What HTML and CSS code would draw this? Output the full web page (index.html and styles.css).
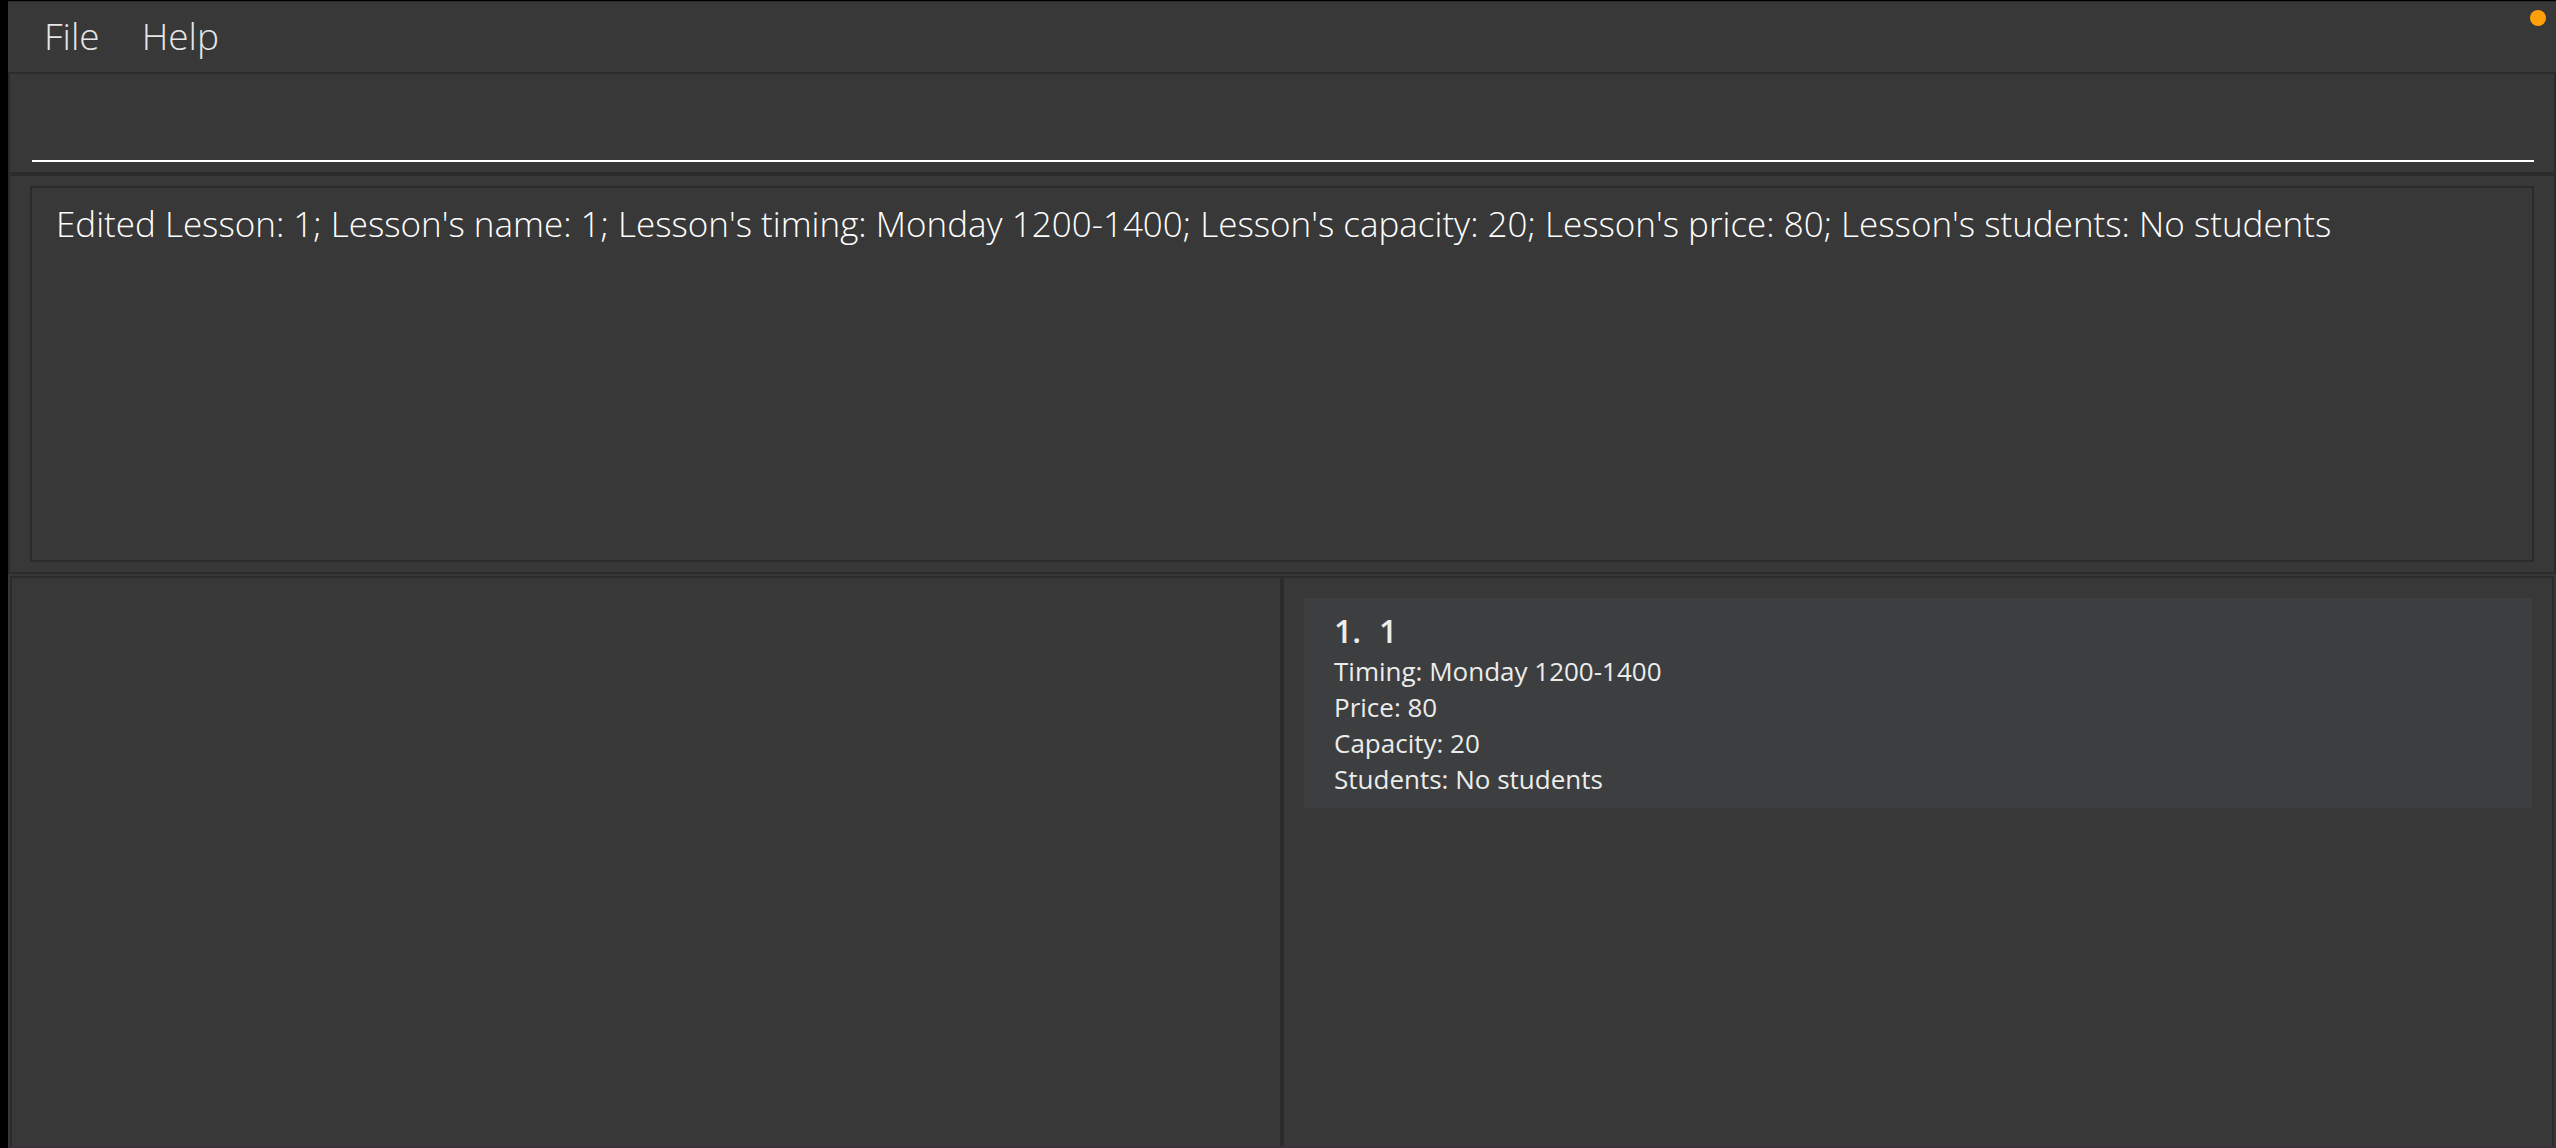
FILE: index.html
```html
<!DOCTYPE html>
<html lang="en">
<head>
<meta charset="utf-8">
<title>Lessons</title>
<link rel="stylesheet" href="styles.css">
</head>
<body>
<div class="window">
  <nav class="menu-bar">
    <button class="menu" type="button">File</button>
    <button class="menu" type="button">Help</button>
    <span class="indicator"></span>
  </nav>
  <form class="pane command-pane">
    <input class="command" type="text" aria-label="Command">
  </form>
  <section class="pane result-pane">
    <textarea class="result" readonly aria-label="Result">Edited Lesson: 1; Lesson's name: 1; Lesson's timing: Monday 1200-1400; Lesson's capacity: 20; Lesson's price: 80; Lesson's students: No students</textarea>
  </section>
  <main class="lists">
    <section class="list"></section>
    <section class="list">
      <article class="card">
        <h2 class="card-title"><span>1.</span><span>1</span></h2>
        <p class="detail">Timing: Monday 1200-1400</p>
        <p class="detail">Price: 80</p>
        <p class="detail">Capacity: 20</p>
        <p class="detail">Students: No students</p>
      </article>
    </section>
  </main>
</div>
</body>
</html>
```
FILE: styles.css
```css
* {
  box-sizing: border-box;
}

body {
  margin: 0;
  background: #000;
  font-family: "Open Sans", sans-serif;
}

.window {
  display: flex;
  flex-direction: column;
  min-height: 100vh;
  padding: 1px 0 0 8px;
}

.menu-bar {
  position: relative;
  display: flex;
  gap: 2px;
  height: 71px;
  padding: 0 16px;
  border-top: 1px solid #2b2b2b;
  background: #383838;
}

.menu {
  padding: 0 20px 2px;
  border: 0;
  background: none;
  color: #e6e6e6;
  font: 300 37px/68px "Open Sans", sans-serif;
}

.indicator {
  position: absolute;
  top: 8px;
  right: 10px;
  width: 16px;
  height: 16px;
  border-radius: 50%;
  background: #ff9f0a;
}

.pane {
  border: 2px solid #2b2b2b;
  background: #383838;
}

.command-pane {
  padding: 10px 20px 10px 22px;
}

.command {
  display: block;
  width: 100%;
  height: 78px;
  padding: 0 8px;
  border: 0;
  border-bottom: 2px solid #fff;
  background: none;
  color: #fff;
  font: 300 35px "Open Sans", sans-serif;
  outline: none;
}

.result-pane {
  padding: 10px 20px;
}

.result {
  display: block;
  width: 100%;
  height: 376px;
  padding: 12px 24px;
  border: 2px solid #2b2b2b;
  background: none;
  color: #fff;
  font: 300 35px/48px "Open Sans", sans-serif;
  resize: none;
  outline: none;
}

.lists {
  flex: 1;
  display: grid;
  grid-template-columns: 1fr 1fr;
  padding: 2px 2px 0;
  border-bottom: 2px solid #383338;
  background: #383838;
}

.list {
  padding: 20px;
  border: 2px solid #2b2b2b;
  border-bottom: 0;
}

.card {
  padding: 11px 30px;
  background: #3c3e3f;
  color: #ececec;
}

.card-title {
  display: flex;
  gap: 18px;
  margin: 0;
  font-size: 32px;
  font-weight: 600;
  line-height: 44px;
}

.detail {
  margin: 0;
  font-size: 26px;
  line-height: 36px;
}
```
